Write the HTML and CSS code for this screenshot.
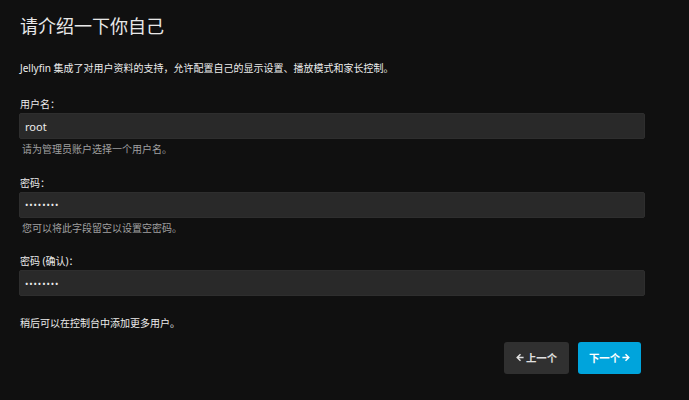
FILE: index.html
```html
<!DOCTYPE html>
<html lang="zh-CN">
<head>
<meta charset="utf-8">
<title>Jellyfin</title>
<link rel="stylesheet" href="styles.css">
</head>
<body>
<main class="page">
  <h1 class="title">请介绍一下你自己</h1>
  <p class="intro">Jellyfin 集成了对用户资料的支持，允许配置自己的显示设置、播放模式和家长控制。</p>

  <div class="field">
    <label class="label" for="user">用户名：</label>
    <input class="input" id="user" type="text" value="root">
    <div class="help">请为管理员账户选择一个用户名。</div>
  </div>

  <div class="field">
    <label class="label" for="pw">密码：</label>
    <input class="input" id="pw" type="password" value="12345678">
    <div class="help">您可以将此字段留空以设置空密码。</div>
  </div>

  <div class="field">
    <label class="label" for="pw2">密码 (确认)：</label>
    <input class="input" id="pw2" type="password" value="12345678">
  </div>

  <p class="note">稍后可以在控制台中添加更多用户。</p>

  <div class="actions">
    <button class="btn btn-prev" type="button">
      <svg class="arrow" viewBox="0 0 8 9" width="8" height="9"><path d="M7.6 4.5H1.3M4.5 1.2L1.2 4.5l3.3 3.3" fill="none" stroke="currentColor" stroke-width="1.5"/></svg>
      <span>上一个</span>
    </button>
    <button class="btn btn-next" type="button">
      <span>下一个</span>
      <svg class="arrow" viewBox="0 0 8 9" width="8" height="9"><path d="M0.4 4.5H6.7M3.5 1.2l3.3 3.3-3.3 3.3" fill="none" stroke="currentColor" stroke-width="1.5"/></svg>
    </button>
  </div>
</main>
</body>
</html>
```

FILE: styles.css
```css
html, body {
  margin: 0;
  padding: 0;
  background: #101010;
}

body {
  font-family: "Noto Sans", "Noto Sans CJK SC", sans-serif;
  color: #e6e6e6;
}

.page {
  width: 626px;
  padding: 14px 0 0 19px;
}

.title {
  margin: 0 0 23px 1px;
  font-size: 18px;
  line-height: 24px;
  font-weight: 400;
  color: #e8e8e8;
}

.intro {
  margin: 0 0 22px 1px;
  font-size: 10px;
  line-height: 14px;
  color: #ececec;
}

.field {
  display: flex;
  flex-direction: column;
  margin-bottom: 19.5px;
}

.label {
  font-size: 10px;
  line-height: 14px;
  margin: 0 0 2px 1px;
  color: #ececec;
}

.input {
  box-sizing: border-box;
  height: 26px;
  width: 626px;
  margin: 0;
  padding: 0 5px;
  border: 1px solid #2e2e2e;
  border-radius: 2px;
  background: #292929;
  color: #ececec;
  font-family: inherit;
  font-size: 11px;
  outline: none;
}

.input[type="password"] {
  font-size: 9px;
  letter-spacing: 0.9px;
}

.help {
  margin: 3px 0 0 3px;
  font-size: 10px;
  line-height: 14px;
  color: #a0a0a0;
}

.note {
  margin: 0 0 12px 1px;
  font-size: 10px;
  line-height: 14px;
  color: #ececec;
}

.actions {
  display: flex;
  justify-content: flex-end;
  gap: 9px;
  padding-right: 4px;
}

.btn {
  display: flex;
  align-items: center;
  justify-content: center;
  gap: 2px;
  height: 32px;
  border: 0;
  border-radius: 3px;
  font-family: inherit;
  font-size: 10.4px;
  font-weight: 700;
  color: #ffffff;
  cursor: pointer;
  padding: 0;
}

.btn-prev {
  width: 65px;
  background: #303030;
  color: #e0e0e0;
}

.btn-next {
  width: 63px;
  background: #00a4dc;
}

.arrow {
  display: block;
}
```
